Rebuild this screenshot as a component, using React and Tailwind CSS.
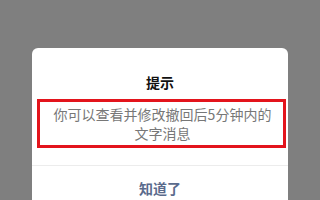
export default function App() {
  const font = { fontFamily: '"Noto Sans CJK SC", "Noto Sans", sans-serif' };
  return (
    <div className="w-[320px] h-[200px] overflow-hidden bg-[#7f7f7f] pt-[48px] px-[32px]" style={font}>
      <div className="w-[256px] h-[170px] bg-white rounded-t-[6px] flex flex-col">
        <div className="h-[24px]" />
        <div className="h-[20px] flex items-center justify-center text-[14px] font-bold text-[#111]">提示</div>
        <div className="h-[7px]" />
        <div className="ml-[5px] mr-[2px] h-[49px] border-[3px] border-[#e3141c] flex flex-col items-center justify-center text-[14px] leading-[19px] text-[#777] pl-[2px]">
          <div>你可以查看并修改撤回后5分钟内的</div>
          <div>文字消息</div>
        </div>
        <div className="h-[17px]" />
        <div className="h-px bg-[#ececec]" />
        <div className="h-[44px] flex items-center justify-center text-[14px] font-bold text-[#5a6b8c]">知道了</div>
      </div>
    </div>
  );
}
